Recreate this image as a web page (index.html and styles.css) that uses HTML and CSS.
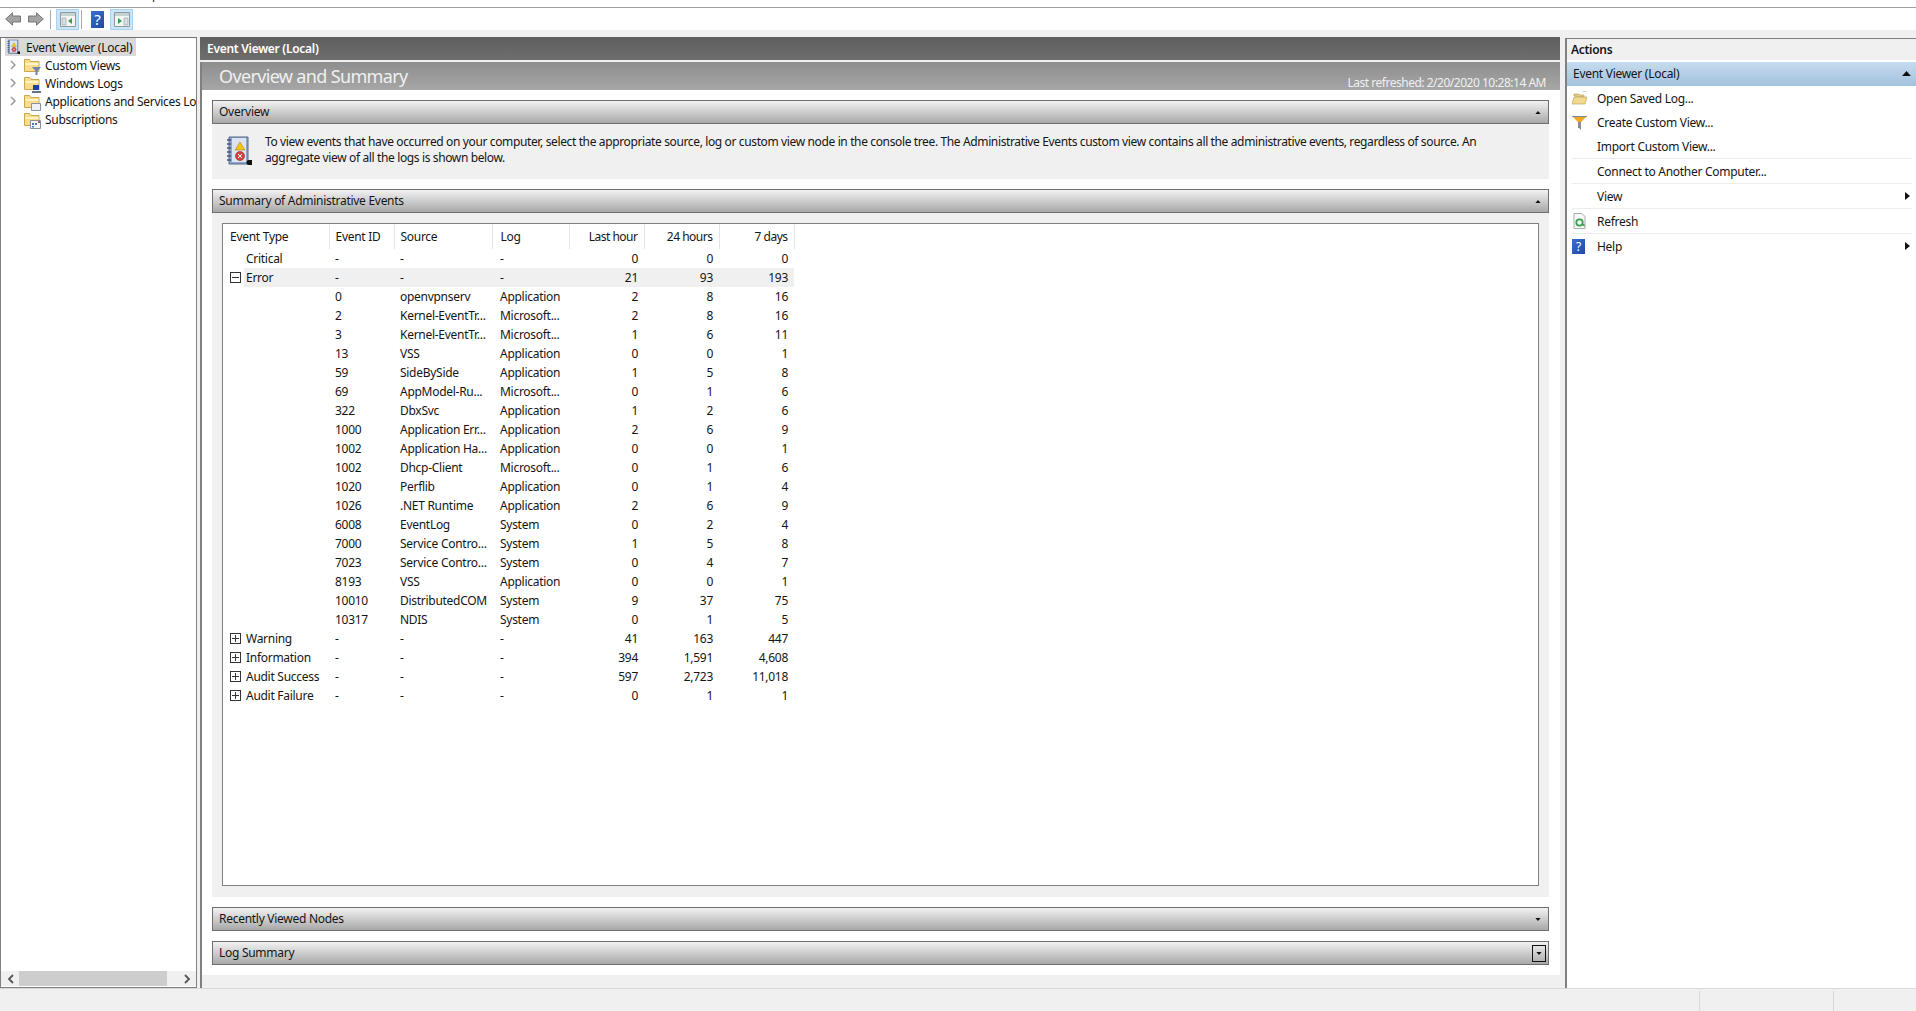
FILE: index.html
```html
<!DOCTYPE html>
<html lang="en">
<head>
  <meta charset="UTF-8" />
  <title>Event Viewer</title>
  <link rel="stylesheet" href="styles.css">
</head>
<body>
<svg class="defs" width="0" height="0">
  <symbol id="folder" viewBox="0 0 16 15">
    <path d="M.5 1.5h5l1.5 2h8v10H.5z" fill="#f7dc8c" stroke="#c9a850"/>
    <path d="M1.5 5h13v2h-13z" fill="#fff3c4"/>
  </symbol>
  <symbol id="chev" viewBox="0 0 6 10">
    <path d="M1 1l4 4-4 4" fill="none" stroke="#9a9a9a" stroke-width="1.5"/>
  </symbol>
  <symbol id="book" viewBox="0 0 28 32">
    <path d="M3 2h19v27H3z" fill="#8fa6c8" stroke="#55688c"/>
    <path d="M6 3h14v24H6z" fill="#dbe4f0"/>
    <path d="M1 5h4M1 9h4M1 13h4M1 17h4M1 21h4M1 25h4" stroke="#44557a" stroke-width="1.5"/>
    <path d="M14 7l5 8H9z" fill="#f5c518" stroke="#a8861a" stroke-width=".6"/>
    <circle cx="14" cy="21" r="4.5" fill="#d8413a" stroke="#8e2420" stroke-width=".6"/>
    <path d="M12 19l4 4m0-4l-4 4" stroke="#fff"/>
    <path d="M23 25h3v5h-3z" fill="#111"/>
    <circle cx="23" cy="27.5" r="2.5" fill="#111"/>
  </symbol>
  <symbol id="tri-up" viewBox="0 0 7 4"><path d="M0 4l3.5-4L7 4z" fill="#111"/></symbol>
  <symbol id="tri-down" viewBox="0 0 7 4"><path d="M0 0l3.5 4L7 0z" fill="#111"/></symbol>
  <symbol id="tri-right" viewBox="0 0 5 8"><path d="M0 0l5 4-5 4z" fill="#111"/></symbol>
</svg>

<div class="menubar"><span>Help</span></div>

<div class="toolbar">
  <svg class="tool-arrow" viewBox="0 0 16 14"><path d="M.7 7L7.5.8v3.2h8v6h-8v3.2z" fill="#a3a3a3" stroke="#777"/></svg>
  <svg class="tool-arrow" viewBox="0 0 16 14"><path d="M15.3 7L8.5.8v3.2h-8v6h8v3.2z" fill="#a3a3a3" stroke="#777"/></svg>
  <span class="tool-sep"></span>
  <span class="tool-btn">
    <svg width="16" height="15" viewBox="0 0 16 15"><path d="M.5.5h15v14H.5z" fill="#f4f6f4" stroke="#8d9a9a"/><path d="M1 1h14v3H1z" fill="#c6d2d2"/><path d="M2 6h4v7H2z" fill="#d9dfe6" stroke="#8fa0ad" stroke-width=".6"/><path d="M12 6v6L8 9z" fill="#3aa04c"/></svg>
  </span>
  <span class="tool-sep tool-sep-b"></span>
  <span class="help-icon help-icon-lg">?</span>
  <span class="tool-btn tool-btn-b">
    <svg width="16" height="15" viewBox="0 0 16 15"><path d="M.5.5h15v14H.5z" fill="#f4f6f4" stroke="#8d9a9a"/><path d="M1 1h14v3H1z" fill="#c6d2d2"/><path d="M10 6h4v7h-4z" fill="#d9dfe6" stroke="#8fa0ad" stroke-width=".6"/><path d="M4 6v6l4-3z" fill="#3aa04c"/></svg>
  </span>
</div>

<div class="main">
  <div class="tree-pane">
    <div class="tree">
      <div class="tree-root">
        <svg width="14" height="16"><use href="#book"/></svg>
        <span class="tree-root-label">Event Viewer (Local)</span>
      </div>
      <div class="tree-item">
        <svg class="chev" width="6" height="10"><use href="#chev"/></svg>
        <span class="tree-icon">
          <svg width="16" height="15"><use href="#folder"/></svg>
          <svg class="overlay" width="9" height="8" viewBox="0 0 9 8"><path d="M0 0h9L5.500 4v4h-2V4z" fill="#6c86a8"/></svg>
        </span>
        Custom Views
      </div>
      <div class="tree-item">
        <svg class="chev" width="6" height="10"><use href="#chev"/></svg>
        <span class="tree-icon">
          <svg width="16" height="15"><use href="#folder"/></svg>
          <svg class="overlay" width="9" height="8" viewBox="0 0 9 8"><path d="M1 0h6v5H1z" fill="#1c3fa8"/><path d="M0 6h9v2H0z" fill="#64748c"/></svg>
        </span>
        Windows Logs
      </div>
      <div class="tree-item">
        <svg class="chev" width="6" height="10"><use href="#chev"/></svg>
        <span class="tree-icon">
          <svg width="16" height="15"><use href="#folder"/></svg>
          <svg class="overlay" width="10" height="8" viewBox="0 0 10 8"><path d="M.5.500h9v7h-9z" fill="#f0f0f4" stroke="#8890a0"/></svg>
        </span>
        Applications and Services Logs
      </div>
      <div class="tree-item">
        <span class="chev-space"></span>
        <span class="tree-icon">
          <svg width="16" height="15"><use href="#folder"/></svg>
          <svg class="overlay" width="11" height="9" viewBox="0 0 11 9"><path d="M.5.500h10v8H.5z" fill="#f4f6fa" stroke="#8890a0"/><path d="M2 3h2v2H2zM5 3h2v2H5zM2 6h2v1.500H2z" fill="#4a78c0"/><path d="M8 1h2v2H8z" fill="#d8514a"/></svg>
        </span>
        Subscriptions
      </div>
    </div>
    <div class="scrollbar">
      <svg width="7" height="10" viewBox="0 0 7 10"><path d="M6 1L2 5l4 4" fill="none" stroke="#555" stroke-width="1.800"/></svg>
      <span class="scroll-thumb"></span>
      <svg width="7" height="10" viewBox="0 0 7 10"><path d="M1 1l4 4-4 4" fill="none" stroke="#555" stroke-width="1.800"/></svg>
    </div>
  </div>

  <div class="center">
    <div class="center-title">Event Viewer (Local)</div>
    <div class="center-panel">
      <div class="subtitle">
        <span class="subtitle-main">Overview and Summary</span>
        <span class="subtitle-date">Last refreshed: 2/20/2020 10:28:14 AM</span>
      </div>
      <div class="center-body">
        <div class="section-head"><span>Overview</span><svg width="6" height="3"><use href="#tri-up"/></svg></div>
        <div class="overview-body">
          <svg class="overview-icon" width="28" height="32"><use href="#book"/></svg>
          <p>To view events that have occurred on your computer, select the appropriate source, log or custom view node in the console tree. The Administrative Events custom view contains all the administrative events, regardless of source. An aggregate view of all the logs is shown below.</p>
        </div>

        <div class="section-head section-gap"><span>Summary of Administrative Events</span><svg width="6" height="3"><use href="#tri-up"/></svg></div>
        <div class="summary-body">
          <div class="table-box">
            <table class="events">
              <colgroup>
                <col class="c-exp"><col class="c-type"><col class="c-id"><col class="c-src"><col class="c-log"><col class="c-num"><col class="c-num"><col class="c-num">
              </colgroup>
              <thead>
                <tr><th colspan="2" class="first">Event Type</th><th>Event ID</th><th>Source</th><th class="log">Log</th><th class="num">Last hour</th><th class="num">24 hours</th><th class="num">7 days</th></tr>
              </thead>
              <tbody>
                <tr><td></td><td class="type">Critical</td><td>-</td><td>-</td><td class="log">-</td><td class="num">0</td><td class="num">0</td><td class="num">0</td></tr>
                <tr class="hl"><td class="exp"><span class="box minus"></span></td><td class="type">Error</td><td>-</td><td>-</td><td class="log">-</td><td class="num">21</td><td class="num">93</td><td class="num">193</td></tr>
                <tr><td colspan="2"></td><td>0</td><td>openvpnserv</td><td class="log">Application</td><td class="num">2</td><td class="num">8</td><td class="num">16</td></tr>
                <tr><td colspan="2"></td><td>2</td><td>Kernel-EventTr...</td><td class="log">Microsoft...</td><td class="num">2</td><td class="num">8</td><td class="num">16</td></tr>
                <tr><td colspan="2"></td><td>3</td><td>Kernel-EventTr...</td><td class="log">Microsoft...</td><td class="num">1</td><td class="num">6</td><td class="num">11</td></tr>
                <tr><td colspan="2"></td><td>13</td><td>VSS</td><td class="log">Application</td><td class="num">0</td><td class="num">0</td><td class="num">1</td></tr>
                <tr><td colspan="2"></td><td>59</td><td>SideBySide</td><td class="log">Application</td><td class="num">1</td><td class="num">5</td><td class="num">8</td></tr>
                <tr><td colspan="2"></td><td>69</td><td>AppModel-Ru...</td><td class="log">Microsoft...</td><td class="num">0</td><td class="num">1</td><td class="num">6</td></tr>
                <tr><td colspan="2"></td><td>322</td><td>DbxSvc</td><td class="log">Application</td><td class="num">1</td><td class="num">2</td><td class="num">6</td></tr>
                <tr><td colspan="2"></td><td>1000</td><td>Application Err...</td><td class="log">Application</td><td class="num">2</td><td class="num">6</td><td class="num">9</td></tr>
                <tr><td colspan="2"></td><td>1002</td><td>Application Ha...</td><td class="log">Application</td><td class="num">0</td><td class="num">0</td><td class="num">1</td></tr>
                <tr><td colspan="2"></td><td>1002</td><td>Dhcp-Client</td><td class="log">Microsoft...</td><td class="num">0</td><td class="num">1</td><td class="num">6</td></tr>
                <tr><td colspan="2"></td><td>1020</td><td>Perflib</td><td class="log">Application</td><td class="num">0</td><td class="num">1</td><td class="num">4</td></tr>
                <tr><td colspan="2"></td><td>1026</td><td>.NET Runtime</td><td class="log">Application</td><td class="num">2</td><td class="num">6</td><td class="num">9</td></tr>
                <tr><td colspan="2"></td><td>6008</td><td>EventLog</td><td class="log">System</td><td class="num">0</td><td class="num">2</td><td class="num">4</td></tr>
                <tr><td colspan="2"></td><td>7000</td><td>Service Contro...</td><td class="log">System</td><td class="num">1</td><td class="num">5</td><td class="num">8</td></tr>
                <tr><td colspan="2"></td><td>7023</td><td>Service Contro...</td><td class="log">System</td><td class="num">0</td><td class="num">4</td><td class="num">7</td></tr>
                <tr><td colspan="2"></td><td>8193</td><td>VSS</td><td class="log">Application</td><td class="num">0</td><td class="num">0</td><td class="num">1</td></tr>
                <tr><td colspan="2"></td><td>10010</td><td>DistributedCOM</td><td class="log">System</td><td class="num">9</td><td class="num">37</td><td class="num">75</td></tr>
                <tr><td colspan="2"></td><td>10317</td><td>NDIS</td><td class="log">System</td><td class="num">0</td><td class="num">1</td><td class="num">5</td></tr>
                <tr><td class="exp"><span class="box plus"></span></td><td class="type">Warning</td><td>-</td><td>-</td><td class="log">-</td><td class="num">41</td><td class="num">163</td><td class="num">447</td></tr>
                <tr><td class="exp"><span class="box plus"></span></td><td class="type">Information</td><td>-</td><td>-</td><td class="log">-</td><td class="num">394</td><td class="num">1,591</td><td class="num">4,608</td></tr>
                <tr><td class="exp"><span class="box plus"></span></td><td class="type">Audit Success</td><td>-</td><td>-</td><td class="log">-</td><td class="num">597</td><td class="num">2,723</td><td class="num">11,018</td></tr>
                <tr><td class="exp"><span class="box plus"></span></td><td class="type">Audit Failure</td><td>-</td><td>-</td><td class="log">-</td><td class="num">0</td><td class="num">1</td><td class="num">1</td></tr>
              </tbody>
            </table>
          </div>
        </div>

        <div class="section-head section-gap"><span>Recently Viewed Nodes</span><svg width="6" height="3"><use href="#tri-down"/></svg></div>
        <div class="section-head section-gap"><span>Log Summary</span><span class="focus-box"><svg width="6" height="3"><use href="#tri-down"/></svg></span></div>
      </div>
      <div class="center-foot"></div>
    </div>
  </div>

  <div class="actions">
    <div class="actions-title">Actions</div>
    <div class="actions-group"><span>Event Viewer (Local)</span><svg width="9" height="5"><use href="#tri-up"/></svg></div>
    <div class="action">
      <svg class="action-icon" width="15" height="14" viewBox="0 0 15 14"><path d="M2 5V3h5l1 1h4v2z" fill="#e8cf8a" stroke="#b89a50" stroke-width=".6"/><path d="M0 13l2-7h13l-2 7z" fill="#f1d98f" stroke="#b89a50" stroke-width=".6"/><path d="M11 0h3" stroke="#6cae6c"/></svg>
      Open Saved Log...
    </div>
    <div class="action">
      <svg class="action-icon" width="15" height="15" viewBox="0 0 15 15"><path d="M0 1h15L9 7v4H6V7z" fill="#f2a71e"/><path d="M6 7h3v8l-2-2H6z" fill="#8c8c8c"/><path d="M0 1h15v1H0z" fill="#7d8c9c"/></svg>
      Create Custom View...
    </div>
    <div class="action action-line"><span class="action-icon"></span>Import Custom View...</div>
    <div class="action action-line"><span class="action-icon"></span>Connect to Another Computer...</div>
    <div class="action action-line"><span class="action-icon"></span>View<svg class="arrow" width="5" height="8"><use href="#tri-right"/></svg></div>
    <div class="action action-line">
      <svg class="action-icon" width="14" height="16" viewBox="0 0 14 16"><path d="M1.500.500h8l3 3v12h-11z" fill="#f6f8f6" stroke="#a8b0a8"/><circle cx="7" cy="9.500" r="3.200" fill="none" stroke="#3aa04c" stroke-width="1.800"/><path d="M9 11h3v3z" fill="#3aa04c"/></svg>
      Refresh
    </div>
    <div class="action action-last">
      <span class="action-icon"><span class="help-icon">?</span></span>Help<svg class="arrow" width="5" height="8"><use href="#tri-right"/></svg>
    </div>
  </div>
</div>

<div class="statusbar"><span class="status-cell"></span><span class="status-cell"></span></div>
</body>
</html>
```
FILE: styles.css
```css
* {
  box-sizing: border-box;
}
html, body {
  margin: 0;
  height: 100%;
}
body {
  display: flex;
  flex-direction: column;
  height: 1011px;
  overflow: hidden;
  background: #f0f0f0;
  color: #151515;
  font-family: "Noto Sans", "Open Sans", sans-serif;
  font-size: 12px;
  letter-spacing: -0.28px;
}
.defs {
  position: absolute;
}

/* top bars */
.menubar {
  height: 8px;
  flex: none;
  overflow: hidden;
  background: #fff;
  border-bottom: 1px solid #a0a0a0;
  padding-left: 134px;
  line-height: 16px;
}
.menubar span {
  display: block;
  margin-top: -13px;
}
.toolbar {
  height: 22px;
  flex: none;
  display: flex;
  align-items: center;
  background: #fff;
  padding-left: 5px;
}
.tool-arrow {
  width: 16px;
  height: 14px;
  margin-right: 7px;
}
.tool-sep {
  width: 1px;
  height: 19px;
  background: #a8a8a8;
  margin: 0 5px 0 -1px;
}
.tool-sep-b {
  margin: 0 9px 0 2px;
}
.tool-btn {
  width: 23px;
  height: 21px;
  margin-top: 1px;
  display: flex;
  align-items: center;
  justify-content: center;
  background: #cce4f7;
  border: 1px solid #a6d2f4;
}
.tool-btn-b {
  margin-left: 6px;
}
.help-icon {
  display: inline-block;
  width: 13px;
  height: 15px;
  background: linear-gradient(135deg, #3a6fd0, #1f4aa4);
  color: #fff;
  text-align: center;
  font-size: 12px;
  line-height: 15px;
  letter-spacing: 0;
}
.help-icon-lg {
  height: 17px;
  line-height: 17px;
  font-size: 15px;
}

/* panes */
.main {
  flex: 1;
  min-height: 0;
  display: flex;
  padding-top: 7px;
  border-bottom: 1px solid #d8d8d8;
  background: #f0f0f0;
}
.tree-pane {
  width: 197px;
  flex: none;
  display: flex;
  flex-direction: column;
  background: #fff;
  border: 1px solid #808080;
  border-top-color: #707070;
}
.tree {
  flex: 1;
  overflow: hidden;
  white-space: nowrap;
}
.tree-root {
  display: flex;
  align-items: center;
  gap: 5px;
  height: 18px;
  width: 131px;
  margin-left: 4px;
  padding-left: 2px;
  background: #d9d9d9;
}
.tree-item {
  display: flex;
  align-items: center;
  height: 18px;
  padding-left: 9px;
}
.chev, .chev-space {
  width: 6px;
  flex: none;
  margin-right: 8px;
}
.tree-icon {
  position: relative;
  width: 16px;
  height: 15px;
  flex: none;
  margin-right: 5px;
}
.tree-icon svg {
  display: block;
}
.overlay {
  position: absolute;
  right: -1px;
  bottom: -2px;
}
.scrollbar {
  height: 15px;
  flex: none;
  margin-bottom: 1px;
  display: flex;
  align-items: center;
  padding-left: 6px;
  background: #f0f0f0;
}
.scroll-thumb {
  height: 15px;
  width: 148px;
  background: #cdcdcd;
  margin: 0 17px 0 5px;
}

/* center */
.center {
  flex: 1;
  min-width: 0;
  margin-left: 3px;
  display: flex;
  flex-direction: column;
}
.center-title {
  height: 23px;
  flex: none;
  padding-left: 7px;
  background: linear-gradient(#5e5e5e, #6e6e6e);
  color: #fff;
  font-weight: 600;
  line-height: 24px;
}
.center-panel {
  flex: 1;
  min-height: 0;
  margin-top: 2px;
  border-left: 2px solid #808080;
  display: flex;
  flex-direction: column;
  background: #fff;
}
.subtitle {
  height: 28px;
  flex: none;
  display: flex;
  justify-content: space-between;
  padding: 0 14px 0 17px;
  background: linear-gradient(#8e8e8e, #a6a6a6);
  color: #f0f0f0;
}
.subtitle-main {
  font-size: 18px;
  line-height: 28px;
  letter-spacing: -0.65px;
}
.subtitle-date {
  align-self: flex-end;
  line-height: 14px;
  letter-spacing: -0.48px;
}
.center-body {
  flex: 1;
  min-height: 0;
  display: flex;
  flex-direction: column;
  padding: 10px 11px 10px 10px;
}
.section-head {
  height: 24px;
  flex: none;
  display: flex;
  align-items: center;
  justify-content: space-between;
  padding: 0 7px 0 6px;
  background: linear-gradient(#f2f2f2, #a8a8a8);
  border: 1px solid #6e6e6e;
}
.section-head > span:first-child {
  margin-bottom: 2px;
}
.section-gap {
  margin-top: 10px;
}
.focus-box {
  width: 14px;
  height: 17px;
  margin-right: -5px;
  border: 1px solid #111;
  display: flex;
  align-items: center;
  justify-content: center;
}
.overview-body {
  height: 55px;
  flex: none;
  display: flex;
  align-items: flex-start;
  background: #f0f0f0;
  padding: 10px 40px 0 14px;
}
.overview-icon {
  flex: none;
  margin: 1px 11px 0 0;
}
.overview-body p {
  margin: 0;
  line-height: 15.6px;
  letter-spacing: -0.37px;
}
.summary-body {
  flex: 1;
  min-height: 0;
  padding: 10px 10px 11px;
  background: #f0f0f0;
}
.table-box {
  height: 100%;
  background: #fff;
  border: 1px solid #808080;
}

/* events table */
.events {
  width: 571px;
  table-layout: fixed;
  border-collapse: collapse;
}
.c-exp { width: 21px; }
.c-type { width: 85px; }
.c-id { width: 65px; }
.c-src { width: 98px; }
.c-log { width: 77px; }
.c-num { width: 75px; }
.events th {
  height: 25px;
  padding: 0 6px;
  font-weight: 400;
  text-align: left;
  border-right: 1px solid #e4e4e4;
  white-space: nowrap;
}
.events th.first {
  padding-left: 7px;
}
.events th.num {
  letter-spacing: -0.5px;
  text-align: right;
}
.events td {
  height: 19px;
  padding: 0 6px;
  white-space: nowrap;
  overflow: hidden;
}
.events .log {
  padding-left: 8px;
}
.events .type {
  padding-left: 2px;
}
.events .num {
  text-align: right;
}
.hl td:not(.exp) {
  background: #f0f0f0;
}
.events .exp {
  padding: 0 0 0 7px;
}
.box {
  position: relative;
  display: block;
  width: 11px;
  height: 11px;
  border: 1px solid #333;
}
.box::before {
  content: "";
  position: absolute;
  left: 1px;
  right: 1px;
  top: 4px;
  height: 1px;
  background: #333;
}
.plus::after {
  content: "";
  position: absolute;
  top: 1px;
  bottom: 1px;
  left: 4px;
  width: 1px;
  background: #333;
}
.center-foot {
  height: 13px;
  flex: none;
  background: #f0f0f0;
}

/* actions */
.actions {
  width: 351px;
  flex: none;
  margin: 1px 0 0 5px;
  background: #fff;
  border-left: 2px solid #808080;
  border-top: 1px solid #808080;
}
.actions-title {
  height: 21px;
  padding-left: 4px;
  background: #f0f0f0;
  font-weight: 600;
  line-height: 21px;
}
.actions-group {
  height: 24px;
  margin-top: 2px;
  display: flex;
  align-items: center;
  justify-content: space-between;
  padding: 0 5px 1px 6px;
  background: linear-gradient(#c6dbee, #a3c2de);
}
.action {
  position: relative;
  height: 24px;
  margin: 0 4px 0 5px;
  display: flex;
  align-items: center;
}
.action-line, .action-last {
  height: 25px;
}
.action-line {
  border-bottom: 1px solid #ececec;
}
.action-icon {
  width: 15px;
  flex: none;
  margin-right: 10px;
}
.arrow {
  position: absolute;
  right: 2px;
  top: 8px;
}

/* status */
.statusbar {
  height: 22px;
  flex: none;
  display: flex;
  justify-content: flex-end;
  padding-top: 2px;
  background: #f0f0f0;
}
.status-cell {
  width: 134px;
  border-left: 1px solid #d8d8d8;
}
.status-cell:last-child {
  width: 83px;
}
```
